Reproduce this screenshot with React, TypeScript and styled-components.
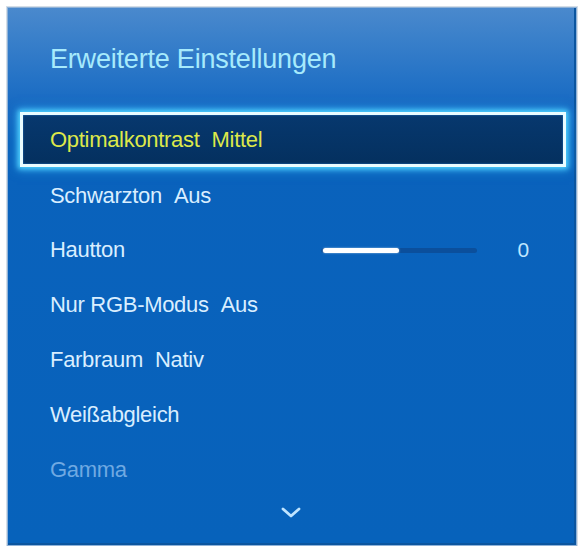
import React from "react";
import styled, { createGlobalStyle } from "styled-components";

const Global = createGlobalStyle`
  html, body { margin: 0; padding: 0; background: #ffffff; }
  body { font-family: "Liberation Sans", Arial, sans-serif; }
`;

const Panel = styled.div`
  box-sizing: border-box;
  margin: 7px 0 0 7px;
  width: 570px;
  height: 539px;
  border: 1px solid #8fb2d8;
  box-shadow: 0 0 0 1px #d4dde6, inset -2px -2px 0 #0b559f;
  background: linear-gradient(
    180deg,
    #4a89cd 0px,
    #3a80ca 30px,
    #2573c6 70px,
    #1669c2 100px,
    #0a62bc 135px,
    #0762bb 100%
  );
  display: flex;
  flex-direction: column;
  overflow: hidden;
`;

const Header = styled.div`
  height: 104px;
  display: flex;
  align-items: center;
  padding-left: 42px;
  padding-bottom: 2px;
  box-sizing: border-box;
`;

const Title = styled.h1`
  margin: 0;
  font-size: 27px;
  font-weight: normal;
  color: #a6eafc;
  letter-spacing: -0.2px;
`;

const List = styled.div`
  display: flex;
  flex-direction: column;
`;

const Row = styled.div<{ $selected?: boolean; $dim?: boolean }>`
  box-sizing: border-box;
  height: 54.8px;
  display: flex;
  align-items: center;
  gap: 12px;
  font-size: 22px;
  letter-spacing: -0.3px;
  color: ${(p) => (p.$selected ? "#dde84a" : p.$dim ? "#6fa9e2" : "#d9eeff")};
  padding: 3px 47px 0 42px;
  ${(p) =>
    p.$selected &&
    `
    margin: 0 10px 0 12px;
    padding: 1px 47px 0 27px;
    border: 3px solid #eafcff;
    background: linear-gradient(180deg, #07386e 0%, #04305f 100%);
    box-shadow: 0 0 5px 2px #52d4ff, 0 0 10px 3px rgba(60, 190, 255, 0.55), inset 0 0 2px #2a7fd0;
  `}
`;

const Label = styled.span`
  white-space: nowrap;
`;

const Spacer = styled.div`
  flex: 1;
`;

const Track = styled.div`
  position: relative;
  width: 156px;
  height: 5px;
  border-radius: 3px;
  background: #0b4f9c;
  margin-right: 29px;
  margin-top: 1px;
`;

const Fill = styled.div`
  position: absolute;
  left: 2px;
  top: 0;
  height: 5px;
  border-radius: 3px;
  background: #ffffff;
  box-shadow: 0 0 2px rgba(255, 255, 255, 0.7);
`;

const Value = styled.span`
  color: #bfe6ff;
  font-size: 21px;
`;

const More = styled.div`
  display: flex;
  justify-content: center;
  padding-top: 11px;
  padding-right: 2px;
`;

const Chevron = () => (
  <svg width="20" height="11" viewBox="0 0 20 11">
    <path
      d="M2 2 L10 9 L18 2"
      fill="none"
      stroke="#bfe4ff"
      strokeWidth="2.8"
      strokeLinecap="round"
      strokeLinejoin="round"
    />
  </svg>
);

const items: { label: string; value?: string; slider?: number; dim?: boolean; selected?: boolean }[] = [
  { label: "Optimalkontrast", value: "Mittel", selected: true },
  { label: "Schwarzton", value: "Aus" },
  { label: "Hautton", slider: 76 },
  { label: "Nur RGB-Modus", value: "Aus" },
  { label: "Farbraum", value: "Nativ" },
  { label: "Weißabgleich" },
  { label: "Gamma", dim: true },
];

export default function App() {
  return (
    <>
      <Global />
      <Panel>
        <Header>
          <Title>Erweiterte Einstellungen</Title>
        </Header>
        <List>
          {items.map((it) => (
            <Row key={it.label} $selected={it.selected} $dim={it.dim}>
              <Label>{it.label}</Label>
              {it.value && <Label>{it.value}</Label>}
              {it.slider !== undefined && (
                <>
                  <Spacer />
                  <Track>
                    <Fill style={{ width: `${it.slider}px` }} />
                  </Track>
                  <Value>0</Value>
                </>
              )}
            </Row>
          ))}
        </List>
        <More>
          <Chevron />
        </More>
      </Panel>
    </>
  );
}
